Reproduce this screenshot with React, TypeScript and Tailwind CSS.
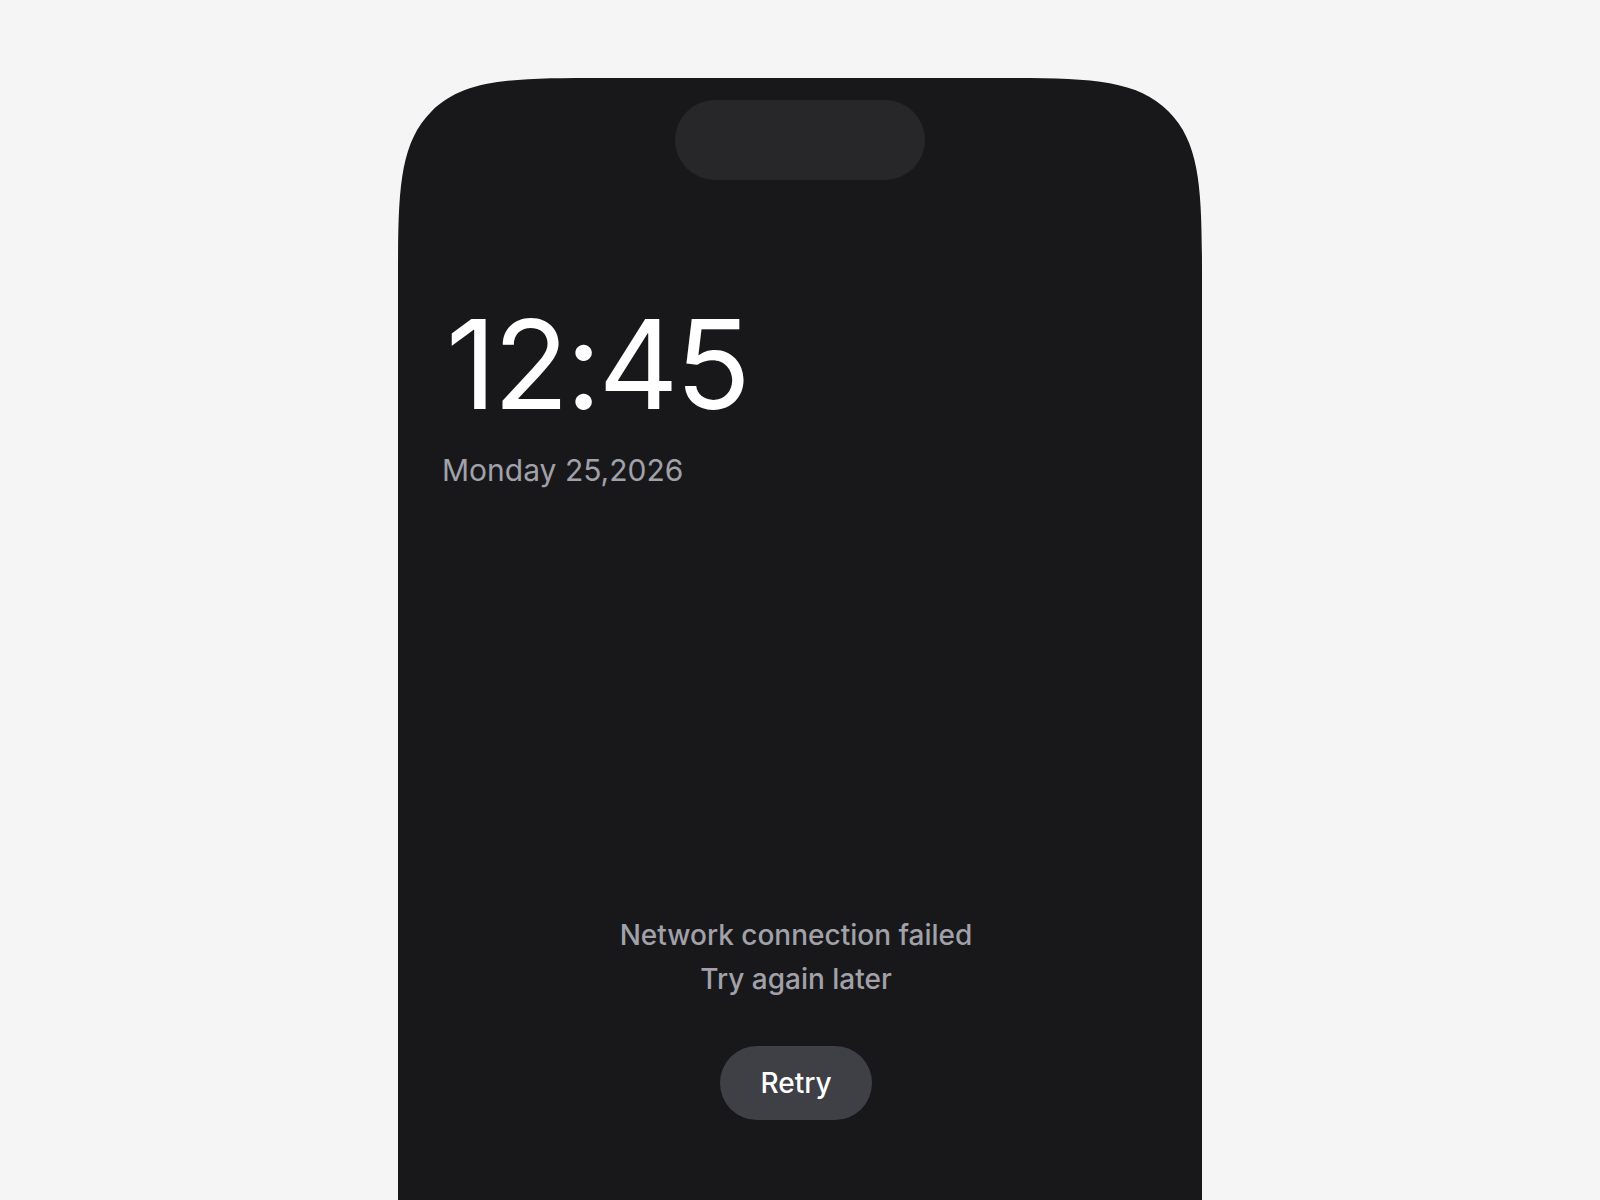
export default function App() {
  return (
    <div className="min-h-screen bg-[#f5f5f5] pt-[78px] overflow-hidden" style={{ fontFamily: 'Inter, "Noto Sans", sans-serif' }}>
      <div className="mx-auto flex min-h-[1200px] w-[804px] flex-col rounded-t-[210px] bg-[#18181b] [corner-shape:squircle]">
        {/* Dynamic island */}
        <div className="mx-auto mt-[22px] h-20 w-[250px] rounded-full bg-[#27272a]" />

        <div className="pl-11">
          <div className="mt-[122px] ml-[4px] text-[124px] font-normal leading-none tracking-tight text-white">12:45</div>
          <div className="mt-[29px] text-[30px] leading-none text-[#a1a1aa]">Monday 25,2026</div>
        </div>

        <div className="mt-[428px] mr-2 flex flex-col items-center">
          <p className="text-center text-[28px] font-medium leading-[44px] text-[#a1a1aa]">
            Network connection failed
            <br />
            Try again later
          </p>
          <button className="mt-[45px] flex h-[74px] items-center rounded-full bg-[#3f3f46] px-10 text-[28px] font-medium text-white">
            Retry
          </button>
        </div>
      </div>
    </div>
  )
}
